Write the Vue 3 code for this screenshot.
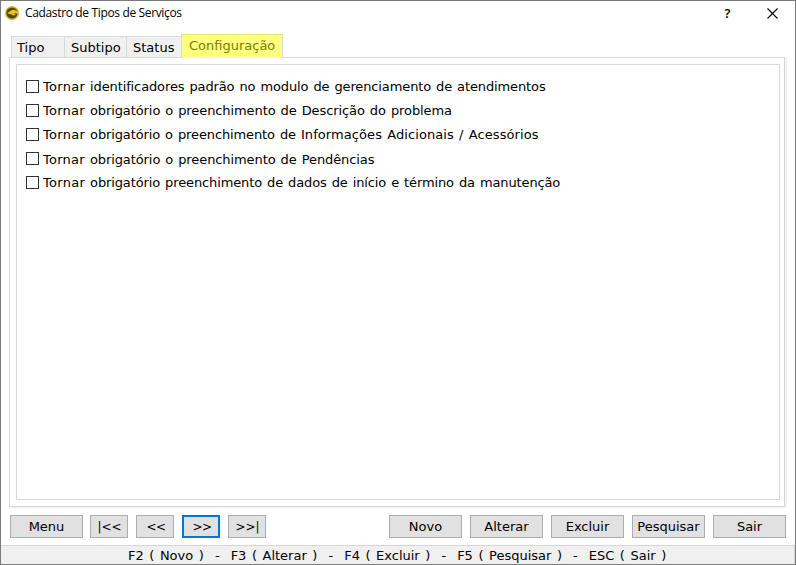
<script setup>
import { ref } from 'vue'

const tabs = [
  { id: 'tipo', label: 'Tipo' },
  { id: 'subtipo', label: 'Subtipo' },
  { id: 'status', label: 'Status' },
  { id: 'config', label: 'Configuração' },
]
const active = ref('config')
const options = ref([
  { id: 'a', label: ' identificadores padrão no modulo de gerenciamento de atendimentos', checked: false },
  { id: 'b', label: ' obrigatório o preenchimento de Descrição do problema', checked: false },
  { id: 'c', label: ' obrigatório o preenchimento de ', tail: 'Informações Adicionais / Acessórios', checked: false },
  { id: 'd', label: ' obrigatório o preenchimento de Pendências', checked: false },
  { id: 'e', label: ' obrigatório preenchimento de dados de início e término da manutenção', checked: false },
])
const nav = ['|<<', '<<', '>>', '>>|']
const actions = ['Novo', 'Alterar', 'Excluir', 'Pesquisar', 'Sair']
const shortcuts = 'F2 ( Novo )  -  F3 ( Alterar )  -  F4 ( Excluir )  -  F5 ( Pesquisar )  -  ESC ( Sair )'
</script>

<template>
  <div class="window">
    <header class="titlebar">
      <svg class="logo" viewBox="0 0 14 14">
        <circle cx="7" cy="7" r="7" fill="#e8b90c" />
        <circle cx="7" cy="7" r="5.6" fill="#444440" />
        <path d="M2.2 7.3 4.8 5.2 7.6 3.8 10.6 4.3 13.6 6.2 13.6 8 10.4 7.2 9 7.5 10.8 9 8.4 9.6 6 8.3 4.2 8.1Z" fill="#f0bf14" />
      </svg>
      <h1>Cadastro de Tipos de Serviços</h1>
      <button class="caption help">?</button>
      <button class="caption close" aria-label="Fechar">
        <svg width="11" height="11" viewBox="0 0 11 11">
          <path d="M.5.5 10.5 10.5M10.5.5.5 10.5" stroke="#000" stroke-width="1.1" fill="none" />
        </svg>
      </button>
    </header>

    <nav class="tabs">
      <button
        v-for="t in tabs"
        :key="t.id"
        :class="['tab', t.id, { active: active === t.id }]"
        @click="active = t.id"
      >{{ t.label }}</button>
    </nav>

    <main class="panel">
      <section class="inner">
        <label v-for="o in options" :key="o.id" :class="['option', o.id]">
          <input v-model="o.checked" type="checkbox" />
          <span class="text"><span class="verb">Tornar</span>{{ o.label }}<span v-if="o.tail" class="tail">{{ o.tail }}</span></span>
        </label>
      </section>
    </main>

    <div class="toolbar">
      <button class="btn menu">Menu</button>
      <button v-for="n in nav" :key="n" :class="['btn', 'step', { focused: n === '>>' }]">{{ n }}</button>
      <div class="actions">
        <button v-for="a in actions" :key="a" :class="['btn', a.toLowerCase()]">{{ a }}</button>
      </div>
    </div>

    <footer class="statusbar"><span>{{ shortcuts }}</span></footer>
  </div>
</template>

<style>
html,
body {
  background: #fff;
  overflow: hidden;
}
</style>

<style scoped>
.window {
  box-sizing: border-box;
  width: 796px;
  height: 565px;
  border: 1px solid #7a7a7a;
  background: #fff;
  color: #000;
  display: flex;
  flex-direction: column;
  font: 13px/16px Verdana, 'DejaVu Sans', sans-serif;
}
button {
  font: inherit;
  color: inherit;
  padding: 0;
  margin: 0;
  border: 0;
  border-radius: 0;
  background: none;
  box-sizing: border-box;
  white-space: nowrap;
}
.titlebar {
  height: 33px;
  flex: none;
  display: flex;
  align-items: flex-start;
  padding-left: 4px;
}
.logo {
  width: 14px;
  height: 14px;
  margin-top: 5px;
}
h1 {
  margin: 4px auto 0 6px;
  font: 400 12px/16px 'Segoe UI', 'Open Sans', sans-serif;
  letter-spacing: -0.35px;
}
.caption {
  width: 45px;
  height: 24px;
  display: flex;
  align-items: center;
  justify-content: center;
}
.help {
  font: 600 13px/16px 'Segoe UI', 'Open Sans', sans-serif;
}
.tabs {
  height: 23px;
  flex: none;
  display: flex;
  align-items: flex-end;
  padding-left: 10px;
}
.tab {
  height: 21px;
  padding-top: 2px;
  border: 1px solid #d9d9d9;
  border-width: 1px 0 0 1px;
  background: #f0f0f0;
  text-align: left;
}
.tipo {
  width: 53px;
  padding-left: 5px;
}
.subtipo {
  width: 62px;
  padding-left: 6px;
}
.status {
  width: 55px;
  padding-left: 6px;
}
.config {
  width: 102px;
  padding-left: 7px;
}
.tab.active {
  position: relative;
  z-index: 1;
  height: 24px;
  margin-bottom: -1px;
  padding-top: 0;
  padding-bottom: 2px;
  background: #ffff80;
  border-color: #e6e673;
  border-right: 1px solid #d9d9d9;
  color: #808000;
}
.panel {
  width: 776px;
  height: 450px;
  flex: none;
  box-sizing: border-box;
  margin-left: 8px;
  padding: 6px 4px 6px 6px;
  border: 1px solid #d9d9d9;
  box-shadow: 1px 1px 0 #f0f0f0, 2px 1px 0 #f0f0f0;
}
.inner {
  height: 436px;
  box-sizing: border-box;
  border: 1px solid #d9d9d9;
  padding: 13px 0 0 9px;
  display: flex;
  flex-direction: column;
}
.option {
  height: 24px;
  display: flex;
  align-items: flex-start;
}
.option input {
  appearance: none;
  width: 13px;
  height: 13px;
  margin: 2px 4px 0 0;
  border: 1px solid #333;
  background: #fff;
}
.text {
  padding-top: 1px;
  white-space: pre;
  word-spacing: 1px;
  letter-spacing: -0.12px;
}
.verb {
  letter-spacing: 0.28px;
}
.tail {
  letter-spacing: 0.08px;
}
.option.d .text {
  padding-top: 2px;
}
.option.d .text,
.option.b .text {
  letter-spacing: -0.09px;
}
.option.d .verb,
.option.b .verb {
  letter-spacing: 0.25px;
}
.toolbar {
  height: 38px;
  flex: none;
  box-sizing: border-box;
  padding: 8px 9px 0;
  display: flex;
}
.btn {
  width: 73px;
  height: 23px;
  border: 1px solid #adadad;
  background: #e1e1e1;
  text-align: center;
}
.step {
  width: 38px;
  margin-left: 8px;
  padding: 1px 0 0 2px;
  font-size: 12px;
  letter-spacing: -0.6px;
}
.step:nth-child(2),
.step:last-of-type {
  letter-spacing: 0;
  padding-left: 1px;
}
.step:nth-child(2) {
  margin-left: 7px;
}
.focused {
  border: 2px solid #0078d7;
}
.actions {
  display: flex;
  gap: 8px;
  margin-left: auto;
}
.statusbar {
  flex: 1;
  box-sizing: border-box;
  border-top: 1px solid #d7d7d7;
  background: #f0f0f0;
  padding: 2px 0 0 127px;
  border-right: 1px solid #d7d7d7;
  white-space: pre;
  word-spacing: 1.4px;
}
</style>
